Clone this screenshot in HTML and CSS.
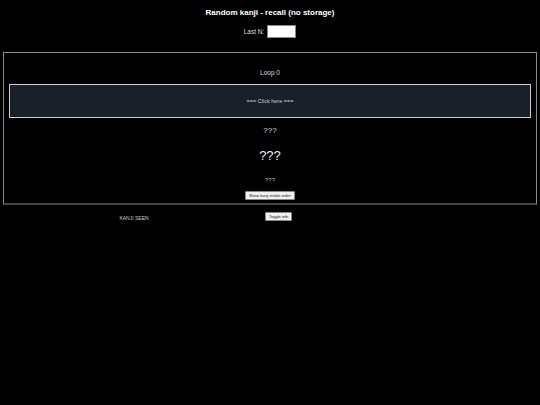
FILE: index.html
```html
<!DOCTYPE html>
<html lang="en">
<head>
    <meta charset="UTF-8">
    <title>Random kanji - recall (no storage)</title>
    <link rel="stylesheet" href="styles.css">
</head>
<body>
    <h1 class="title">Random kanji - recall (no storage)</h1>
    <div class="last-n">
        <label for="last-n">Last N:</label>
        <input id="last-n" type="text">
    </div>

    <div class="quiz">
        <div class="loop">Loop 0</div>
        <div class="click-box">=== Click here ===</div>
        <div class="reading">???</div>
        <div class="kanji">???</div>
        <div class="meaning">???</div>
        <button class="small-btn">Show kanji stroke order</button>
    </div>

    <div class="footer">
        <div class="seen">KANJI SEEN</div>
        <button class="small-btn toggle">Toggle info</button>
    </div>
</body>
</html>
```

FILE: styles.css
```css
body {
    margin: 0;
    padding: 3px 3px 0;
    background: #000;
    color: #fff;
    font-family: "Liberation Sans", Arial, sans-serif;
}

.title {
    margin: 0;
    padding-top: 4px;
    font-size: 8px;
    line-height: 11px;
    text-align: center;
}

.last-n {
    display: flex;
    justify-content: center;
    align-items: center;
    gap: 3px;
    margin-top: 7px;
    font-size: 6.5px;
    color: #ddd;
}

.last-n input {
    width: 27px;
    height: 11px;
    padding: 0;
    border: 1px solid #888;
    background: #fff;
}

.quiz {
    margin-top: 14px;
    padding: 0 5px 2px;
    border: 1px solid #888;
    border-bottom: 2px solid #444;
    text-align: center;
}

.loop {
    margin-top: 16px;
    font-size: 6.5px;
    color: #ddd;
}

.click-box {
    margin-top: 8px;
    padding: 13px 0;
    background: #1a2029;
    border: 1px solid #ccc;
    font-size: 5.5px;
    color: #ccc;
}

.reading {
    margin-top: 8px;
    font-size: 8px;
    color: #ddd;
}

.kanji {
    margin-top: 13px;
    font-size: 13px;
    color: #eee;
}

.meaning {
    margin-top: 14px;
    font-size: 6px;
    color: #bbb;
}

.small-btn {
    margin-top: 4px;
    padding: 1px 3px;
    font-family: "Liberation Sans", Arial, sans-serif;
    font-size: 4px;
    background: #f0f0f0;
    color: #222;
    border: 1px solid #888;
    border-radius: 1px;
}

.footer {
    display: flex;
    align-items: center;
}

.seen {
    width: 262px;
    text-align: center;
    font-size: 5px;
    color: #ccc;
    margin-top: 10px;
}

.toggle {
    margin-top: 7px;
}
```
